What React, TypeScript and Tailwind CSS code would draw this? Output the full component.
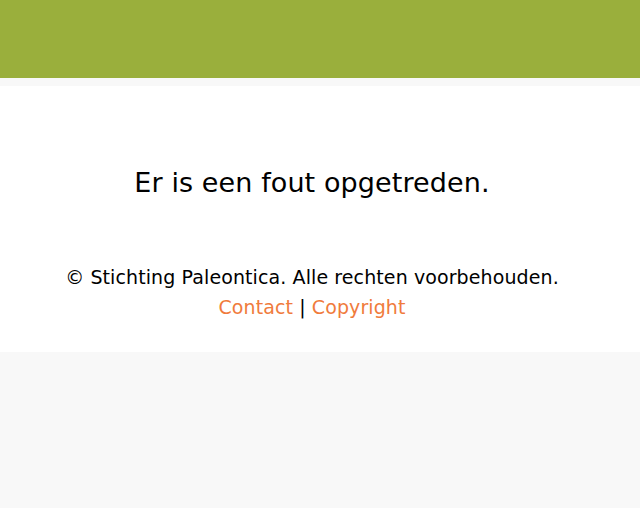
export default function App() {
  return (
    <div className="min-h-[508px] bg-[#f8f8f8]" style={{ fontFamily: '"DejaVu Sans", Verdana, sans-serif' }}>
      <div className="h-[78px] bg-[#9aaf3c]" />
      <div className="h-[8px] bg-[#f8f8f8]" />
      <div className="bg-white flex flex-col items-center pr-[16px] text-black">
        <h1 className="pt-[80px] text-[27px] leading-[34px] tracking-[0.1px]">Er is een fout opgetreden.</h1>
        <div className="pt-[62px] pb-[30px] text-[19px] leading-[30px] tracking-[0.1px] text-center">
          <p>© Stichting Paleontica. Alle rechten voorbehouden.</p>
          <p>
            <a href="#" className="text-[#f07b3c]">Contact</a> | <a href="#" className="text-[#f07b3c]">Copyright</a>
          </p>
        </div>
      </div>
    </div>
  );
}
